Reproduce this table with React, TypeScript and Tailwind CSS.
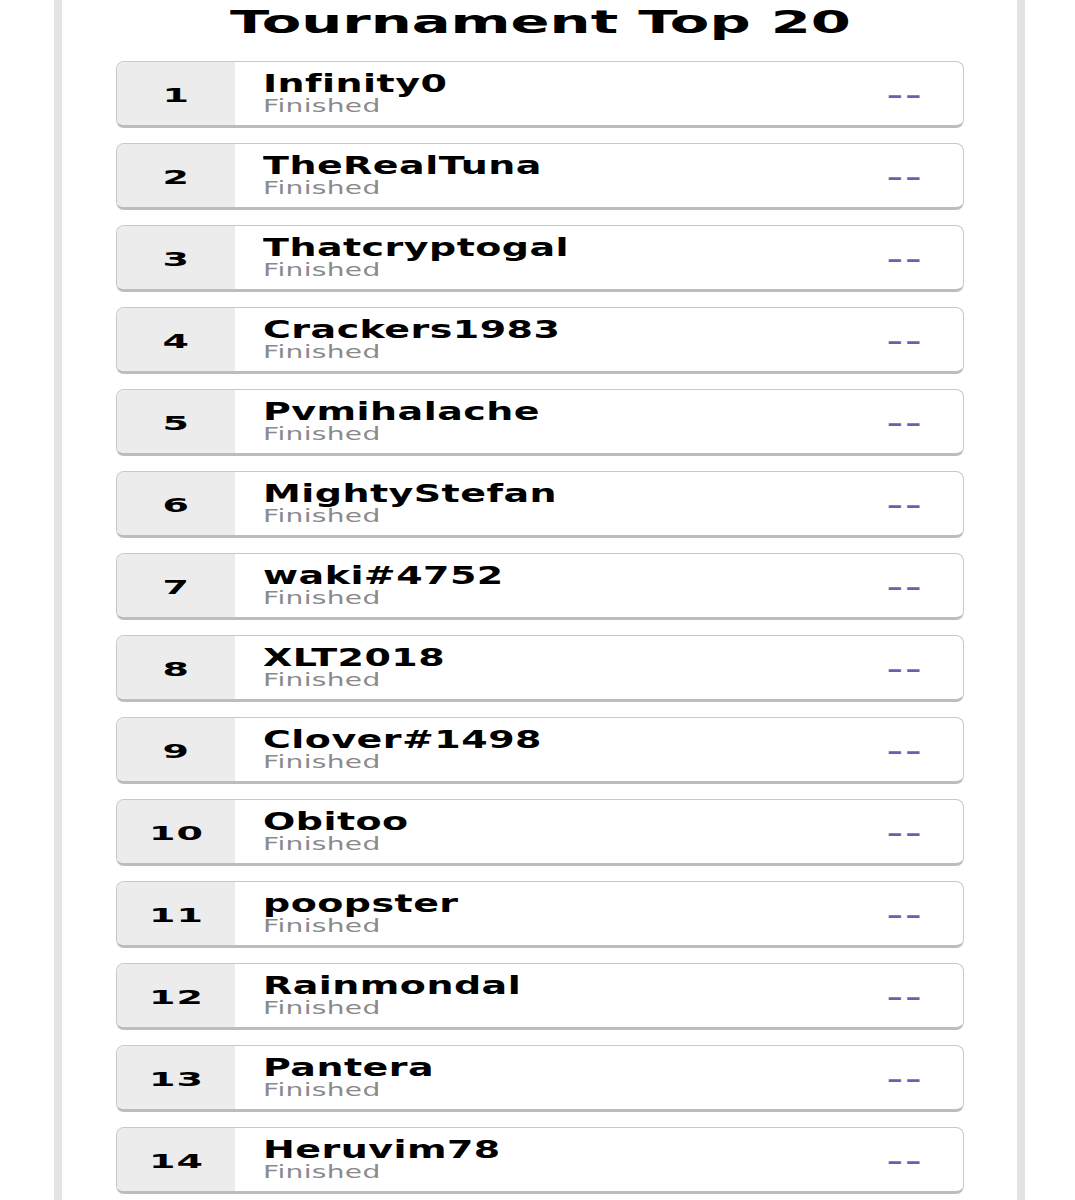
import React from 'react';

const players = [
  'Infinity0',
  'TheRealTuna',
  'Thatcryptogal',
  'Crackers1983',
  'Pvmihalache',
  'MightyStefan',
  'waki#4752',
  'XLT2018',
  'Clover#1498',
  'Obitoo',
  'poopster',
  'Rainmondal',
  'Pantera',
  'Heruvim78',
];

const font = { fontFamily: '"DejaVu Sans", "Liberation Sans", sans-serif' };

export default function App() {
  return (
    <div className="h-[1200px] overflow-hidden bg-white pl-[54px]" style={font}>
      <div className="w-[971px] min-h-[1200px] border-x-8 border-[#e3e3e3] pl-[54px] pr-[53px]">
        <h1 className="h-[61px] pt-[2px] text-center text-[32px] leading-[40px] font-bold text-black">
          <span className="inline-block scale-x-[1.8]">Tournament Top 20</span>
        </h1>
        <div className="flex flex-col gap-[15px]">
          {players.map((name, i) => (
            <Row key={name} rank={i + 1} name={name} />
          ))}
        </div>
      </div>
    </div>
  );
}

function Row({ rank, name }: { rank: number; name: string }) {
  return (
    <div className="flex h-[67px] rounded-[8px] border border-b-[3px] border-[#c9c9c9] border-b-[#bdbdbd] overflow-hidden bg-white">
      <div className="w-[118px] shrink-0 bg-[#ececec] flex items-center justify-center pt-[3px]">
        <span className="inline-block scale-x-[1.9] text-[20px] font-bold tracking-[0.5px] text-black">
          {rank}
        </span>
      </div>
      <div className="flex-1 flex items-center pl-[28px] pr-[39px]">
        <div className="flex-1 flex flex-col pt-[1px]">
          <span className="inline-block origin-left scale-x-[1.52] text-[25px] leading-[20px] font-bold tracking-[0.3px] text-black">
            {name}
          </span>
          <span className="mt-[4px] inline-block origin-left scale-x-[1.65] text-[17px] leading-[17px] tracking-[0.2px] text-[#8a8a8a]">
            Finished
          </span>
        </div>
        <span className="inline-block origin-right scale-x-[2] text-[20px] font-bold tracking-[1px] text-[#6c5fb2] pt-[2px]">
          --
        </span>
      </div>
    </div>
  );
}
